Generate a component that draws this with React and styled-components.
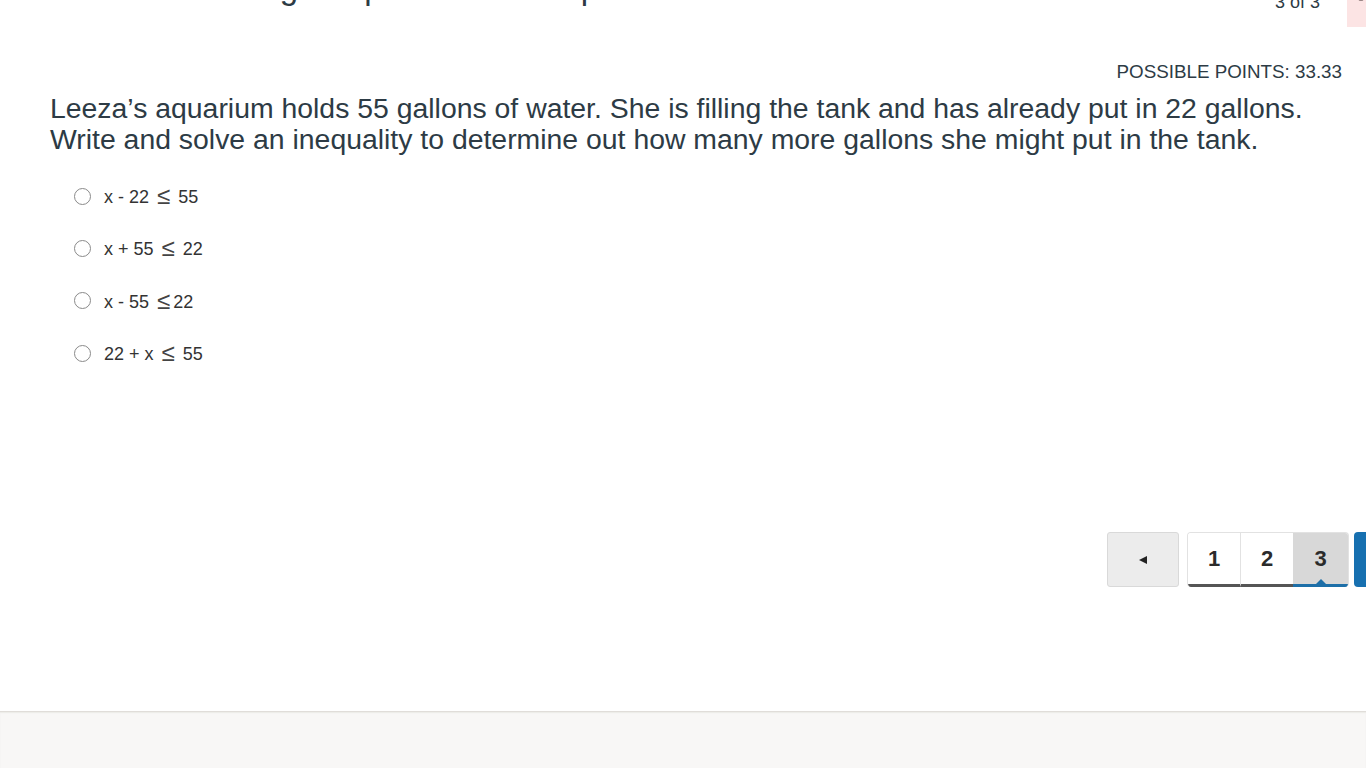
import React from 'react'
import styled, { createGlobalStyle } from 'styled-components'

const GlobalStyle = createGlobalStyle`
  html, body {
    margin: 0;
    padding: 0;
    background: #fff;
    overflow: hidden;
  }
  body {
    font-family: "Liberation Sans", Arial, sans-serif;
    color: #2d3b45;
  }
`

const options = [
  ['x - 22 ', ' 55'],
  ['x + 55 ', ' 22'],
  ['x - 55 ', '22'],
  ['22 + x ', ' 55'],
]

function App() {
  return (
    <Page>
      <GlobalStyle />
      <Main>
        <HeaderRow>
          <Title>Unit Test: Writing Inequalities and Equations</Title>
          <HeaderRight>
            <Counter>3 of 3</Counter>
            <TimerBox>
              <svg width="14" height="14" viewBox="0 0 14 14">
                <circle cx="7" cy="7" r="5.5" fill="none" stroke="#3a2a2a" strokeWidth="2" />
              </svg>
            </TimerBox>
          </HeaderRight>
        </HeaderRow>

        <Points>POSSIBLE POINTS: 33.33</Points>

        <Question>
          Leeza’s aquarium holds 55 gallons of water. She is filling the tank and has already put in 22 gallons.
          <br />
          Write and solve an inequality to determine out how many more gallons she might put in the tank.
        </Question>

        <Options>
          {options.map(([left, right], i) => (
            <Option key={i}>
              <Radio />
              <span>
                {left}
                <Le>≤</Le>
                {right}
              </span>
            </Option>
          ))}
        </Options>

        <Pager>
          <PrevButton>
            <svg width="10" height="10" viewBox="0 0 10 10">
              <polygon points="1,5 9,1 9,9" fill="#222" />
            </svg>
          </PrevButton>
          <PageGroup>
            <PageButton>1</PageButton>
            <PageButton>2</PageButton>
            <PageButton active>3</PageButton>
          </PageGroup>
          <NextButton />
        </Pager>
      </Main>
      <Footer />
    </Page>
  )
}

export default App

const Page = styled.div`
  height: 100vh;
  display: flex;
  flex-direction: column;
  overflow: hidden;
`

const Main = styled.div`
  flex: 1;
  display: flex;
  flex-direction: column;
`

const HeaderRow = styled.div`
  display: flex;
  justify-content: space-between;
  align-items: flex-start;
  margin-top: -31px;
  margin-right: -30px;
  padding-left: 50px;
  height: 58px;
`

const Title = styled.h1`
  margin: 0;
  font-size: 33px;
  line-height: 38px;
  font-weight: 400;
  color: #2d3b45;
`

const HeaderRight = styled.div`
  display: flex;
  align-items: flex-start;
  gap: 27px;
`

const Counter = styled.div`
  font-size: 18px;
  line-height: 22px;
  margin-top: 22px;
  color: #2d3b45;
`

const TimerBox = styled.div`
  width: 49px;
  height: 58px;
  background: #fce4e4;
  display: flex;
  align-items: flex-end;
  padding: 0 0 26px 7px;
  box-sizing: border-box;
`

const Points = styled.div`
  align-self: flex-end;
  margin-right: 24px;
  margin-top: 34px;
  font-size: 18.8px;
  line-height: 22px;
  color: #2d3b45;
`

const Question = styled.div`
  padding: 0 50px;
  margin-top: 10px;
  font-size: 28.4px;
  line-height: 31px;
  color: #2d3b45;
`

const Options = styled.div`
  display: flex;
  flex-direction: column;
  padding-left: 74px;
  margin-top: 15px;
`

const Option = styled.label`
  display: flex;
  align-items: center;
  height: 52.3px;
  gap: 13px;
  font-size: 18px;
  color: #333;
`

const Le = styled.span`
  display: inline-block;
  font-size: 24px;
  line-height: 1;
  margin: 0 3px;
  vertical-align: -1px;
  color: #444;
`

const Radio = styled.span`
  width: 15px;
  height: 15px;
  border: 1px solid #8a8a8a;
  border-radius: 50%;
  background: #fff;
  flex-shrink: 0;
`

const Pager = styled.div`
  display: flex;
  justify-content: flex-end;
  align-items: flex-start;
  margin-top: 153px;
  margin-right: -40px;
`

const PrevButton = styled.button`
  width: 72px;
  height: 55px;
  border: 1px solid #d9d9d9;
  border-radius: 3px;
  background: #ececec;
  display: flex;
  align-items: center;
  justify-content: center;
  margin-right: 8px;
  padding: 0;
`

const PageGroup = styled.div`
  display: flex;
  border-radius: 4px;
  overflow: hidden;
  border: 1px solid #e2e2e2;
  border-bottom: none;
`

const PageButton = styled.div`
  position: relative;
  width: 52px;
  height: 51px;
  display: flex;
  align-items: center;
  justify-content: center;
  font-size: 22px;
  font-weight: 700;
  color: #2b2b2b;
  background: ${p => (p.active ? '#d8d8d8' : '#fff')};
  border-left: ${p => (p.active ? 'none' : '1px solid #e2e2e2')};
  border-bottom: 3px solid ${p => (p.active ? '#1d6fa8' : '#555')};
  &:first-child {
    border-left: none;
  }
  ${p => p.active && `
    width: 55px;
    &::after {
      content: '';
      position: absolute;
      bottom: 0;
      left: 50%;
      transform: translateX(-50%);
      border-left: 5px solid transparent;
      border-right: 5px solid transparent;
      border-bottom: 5px solid #1d6fa8;
    }
  `}
`

const NextButton = styled.div`
  width: 52px;
  height: 55px;
  margin-left: 5px;
  background: #1770b0;
  border-radius: 4px;
`

const Footer = styled.footer`
  height: 56px;
  background: #f8f7f6;
  border-top: 1px solid #e0ddd9;
  box-shadow: inset 0 1px 1px #ecebe8;
`
